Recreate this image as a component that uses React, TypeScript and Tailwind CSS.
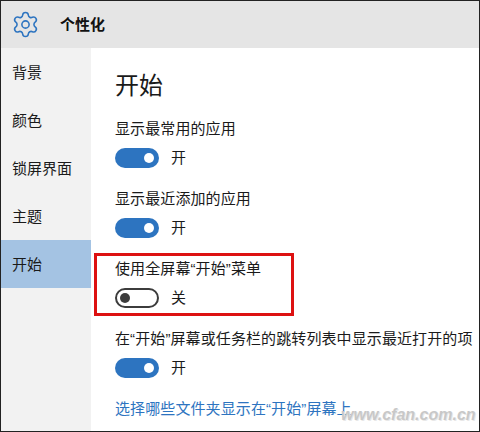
import React from "react";
import { Settings } from "lucide-react";

const font = { fontFamily: '"Liberation Sans", "Noto Sans CJK SC", sans-serif' };

const navItems = ["背景", "颜色", "锁屏界面", "主题", "开始"];

const Toggle: React.FC<{ on: boolean; label: string }> = ({ on, label }) => (
  <div className="flex items-center gap-[12px] h-[20px]">
    {on ? (
      <div className="w-[44px] h-[20px] rounded-full bg-[#2d74c0] flex items-center justify-end pr-[5px]">
        <div className="w-[10px] h-[10px] rounded-full bg-white" />
      </div>
    ) : (
      <div className="w-[44px] h-[20px] rounded-full border-2 border-[#3c3c3c] bg-white flex items-center pl-[3px]">
        <div className="w-[10px] h-[10px] rounded-full bg-[#3c3c3c]" />
      </div>
    )}
    <span className="text-[15px] leading-[20px] text-[#1a1a1a]">{label}</span>
  </div>
);

const Option: React.FC<{ title: string; on: boolean; label: string; className: string }> = ({
  title,
  on,
  label,
  className,
}) => (
  <div className={className}>
    <div className="text-[15px] leading-[22px] tracking-[0.1px] text-[#1a1a1a] whitespace-nowrap mb-[8px]">{title}</div>
    <Toggle on={on} label={label} />
  </div>
);

export default function App() {
  return (
    <div className="relative w-[480px] h-[432px] overflow-hidden bg-white border border-[#222]" style={font}>
      <div className="h-[47px] bg-[#e5e5e5] flex items-center pl-[10px]">
        <Settings size={29} strokeWidth={1.3} className="text-[#2d74c0]" />
        <span className="ml-[20px] pt-[2px] text-[15px] font-bold text-[#111]">个性化</span>
      </div>
      <div className="flex h-[383px]">
        <div className="w-[90px] bg-[#f2f2f2] shrink-0">
          {navItems.map((item) => (
            <div
              key={item}
              className={`h-[48px] flex items-center pl-[11px] pt-[2px] text-[15px] text-[#1a1a1a] ${
                item === "开始" ? "bg-[#a4c3e3]" : ""
              }`}
            >
              {item}
            </div>
          ))}
        </div>
        <div className="pl-[24px] pt-[21px]">
          <div className="text-[24px] leading-[34px] text-[#1a1a1a]">开始</div>
          <Option className="mt-[15px]" title="显示最常用的应用" on label="开" />
          <Option className="mt-[20px]" title="显示最近添加的应用" on label="开" />
          <Option className="mt-[20px]" title="使用全屏幕“开始”菜单" on={false} label="关" />
          <Option className="mt-[20px]" title="在“开始”屏幕或任务栏的跳转列表中显示最近打开的项" on label="开" />
          <div className="mt-[20px] text-[15px] leading-[22px] tracking-[0.1px] text-[#2d74c0] whitespace-nowrap">
            选择哪些文件夹显示在“开始”屏幕上
          </div>
        </div>
      </div>
      <div className="absolute left-[93px] top-[252px] w-[200px] h-[63px] border-[3px] border-[#dd1111]" />
      <div
        className="absolute left-[340px] top-[404px] text-[16px] leading-[20px] font-bold italic text-[#c8c8c8] [text-shadow:1px_1px_0_#e8e8e8]"
        style={{ fontFamily: '"Liberation Sans", sans-serif' }}
      >
        www.cfan.com.cn
      </div>
    </div>
  );
}
